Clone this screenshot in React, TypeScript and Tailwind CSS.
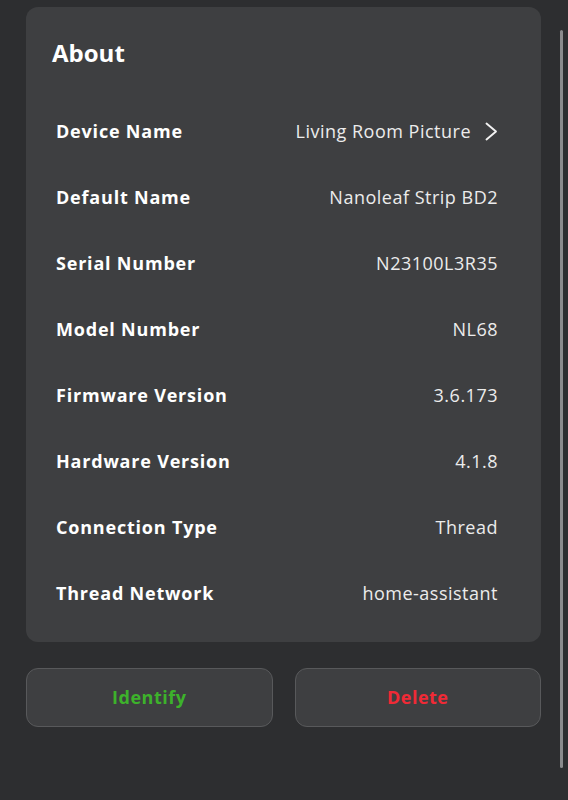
const rows = [
  { label: "Device Name", value: "Living Room Picture", link: true },
  { label: "Default Name", value: "Nanoleaf Strip BD2" },
  { label: "Serial Number", value: "N23100L3R35" },
  { label: "Model Number", value: "NL68" },
  { label: "Firmware Version", value: "3.6.173" },
  { label: "Hardware Version", value: "4.1.8" },
  { label: "Connection Type", value: "Thread" },
  { label: "Thread Network", value: "home-assistant" },
];

function Chevron() {
  return (
    <svg width="13" height="19" viewBox="0 0 13 19" fill="none" className="ml-[14px]">
      <polyline
        points="1.5,1.5 11,9.5 1.5,17.5"
        stroke="#f2f2f2"
        strokeWidth="1.9"
        strokeLinecap="round"
        strokeLinejoin="round"
      />
    </svg>
  );
}

export default function App() {
  return (
    <div
      className="relative w-full h-[800px] bg-[#2d2e30] text-white overflow-hidden"
      style={{ fontFamily: "'Open Sans', 'Noto Sans', sans-serif" }}
    >
      <div className="pl-[26px] pr-[27px] pt-[7px]">
        <div className="bg-[#3e3f41] rounded-xl pt-[31px] pb-[16px]">
          <h1 className="pl-[26px] text-[24px] font-bold leading-[30px]">About</h1>
          <div className="mt-[30px] pl-[30px] pr-[43px]">
            {rows.map((row) => (
              <div key={row.label} className="flex items-center justify-between h-[66px]">
                <span className="text-[18px] font-bold tracking-[0.8px]">{row.label}</span>
                <span className="flex items-center text-[18px] tracking-[0.5px] text-[#ececec]">
                  {row.value}
                  {row.link && <Chevron />}
                </span>
              </div>
            ))}
          </div>
        </div>
        <div className="grid grid-cols-2 gap-[22px] mt-[26px]">
          <button className="h-[59px] rounded-xl border border-[#58595b] bg-[#3e3f41] text-[18px] font-bold tracking-[0.5px] text-[#3db22b]">
            Identify
          </button>
          <button className="h-[59px] rounded-xl border border-[#58595b] bg-[#3e3f41] text-[18px] font-bold tracking-[0.5px] text-[#f02a36]">
            Delete
          </button>
        </div>
      </div>
      <div className="absolute right-[5px] top-[30px] w-[3px] h-[738px] rounded-full bg-[#8b8b8d]" />
    </div>
  );
}
